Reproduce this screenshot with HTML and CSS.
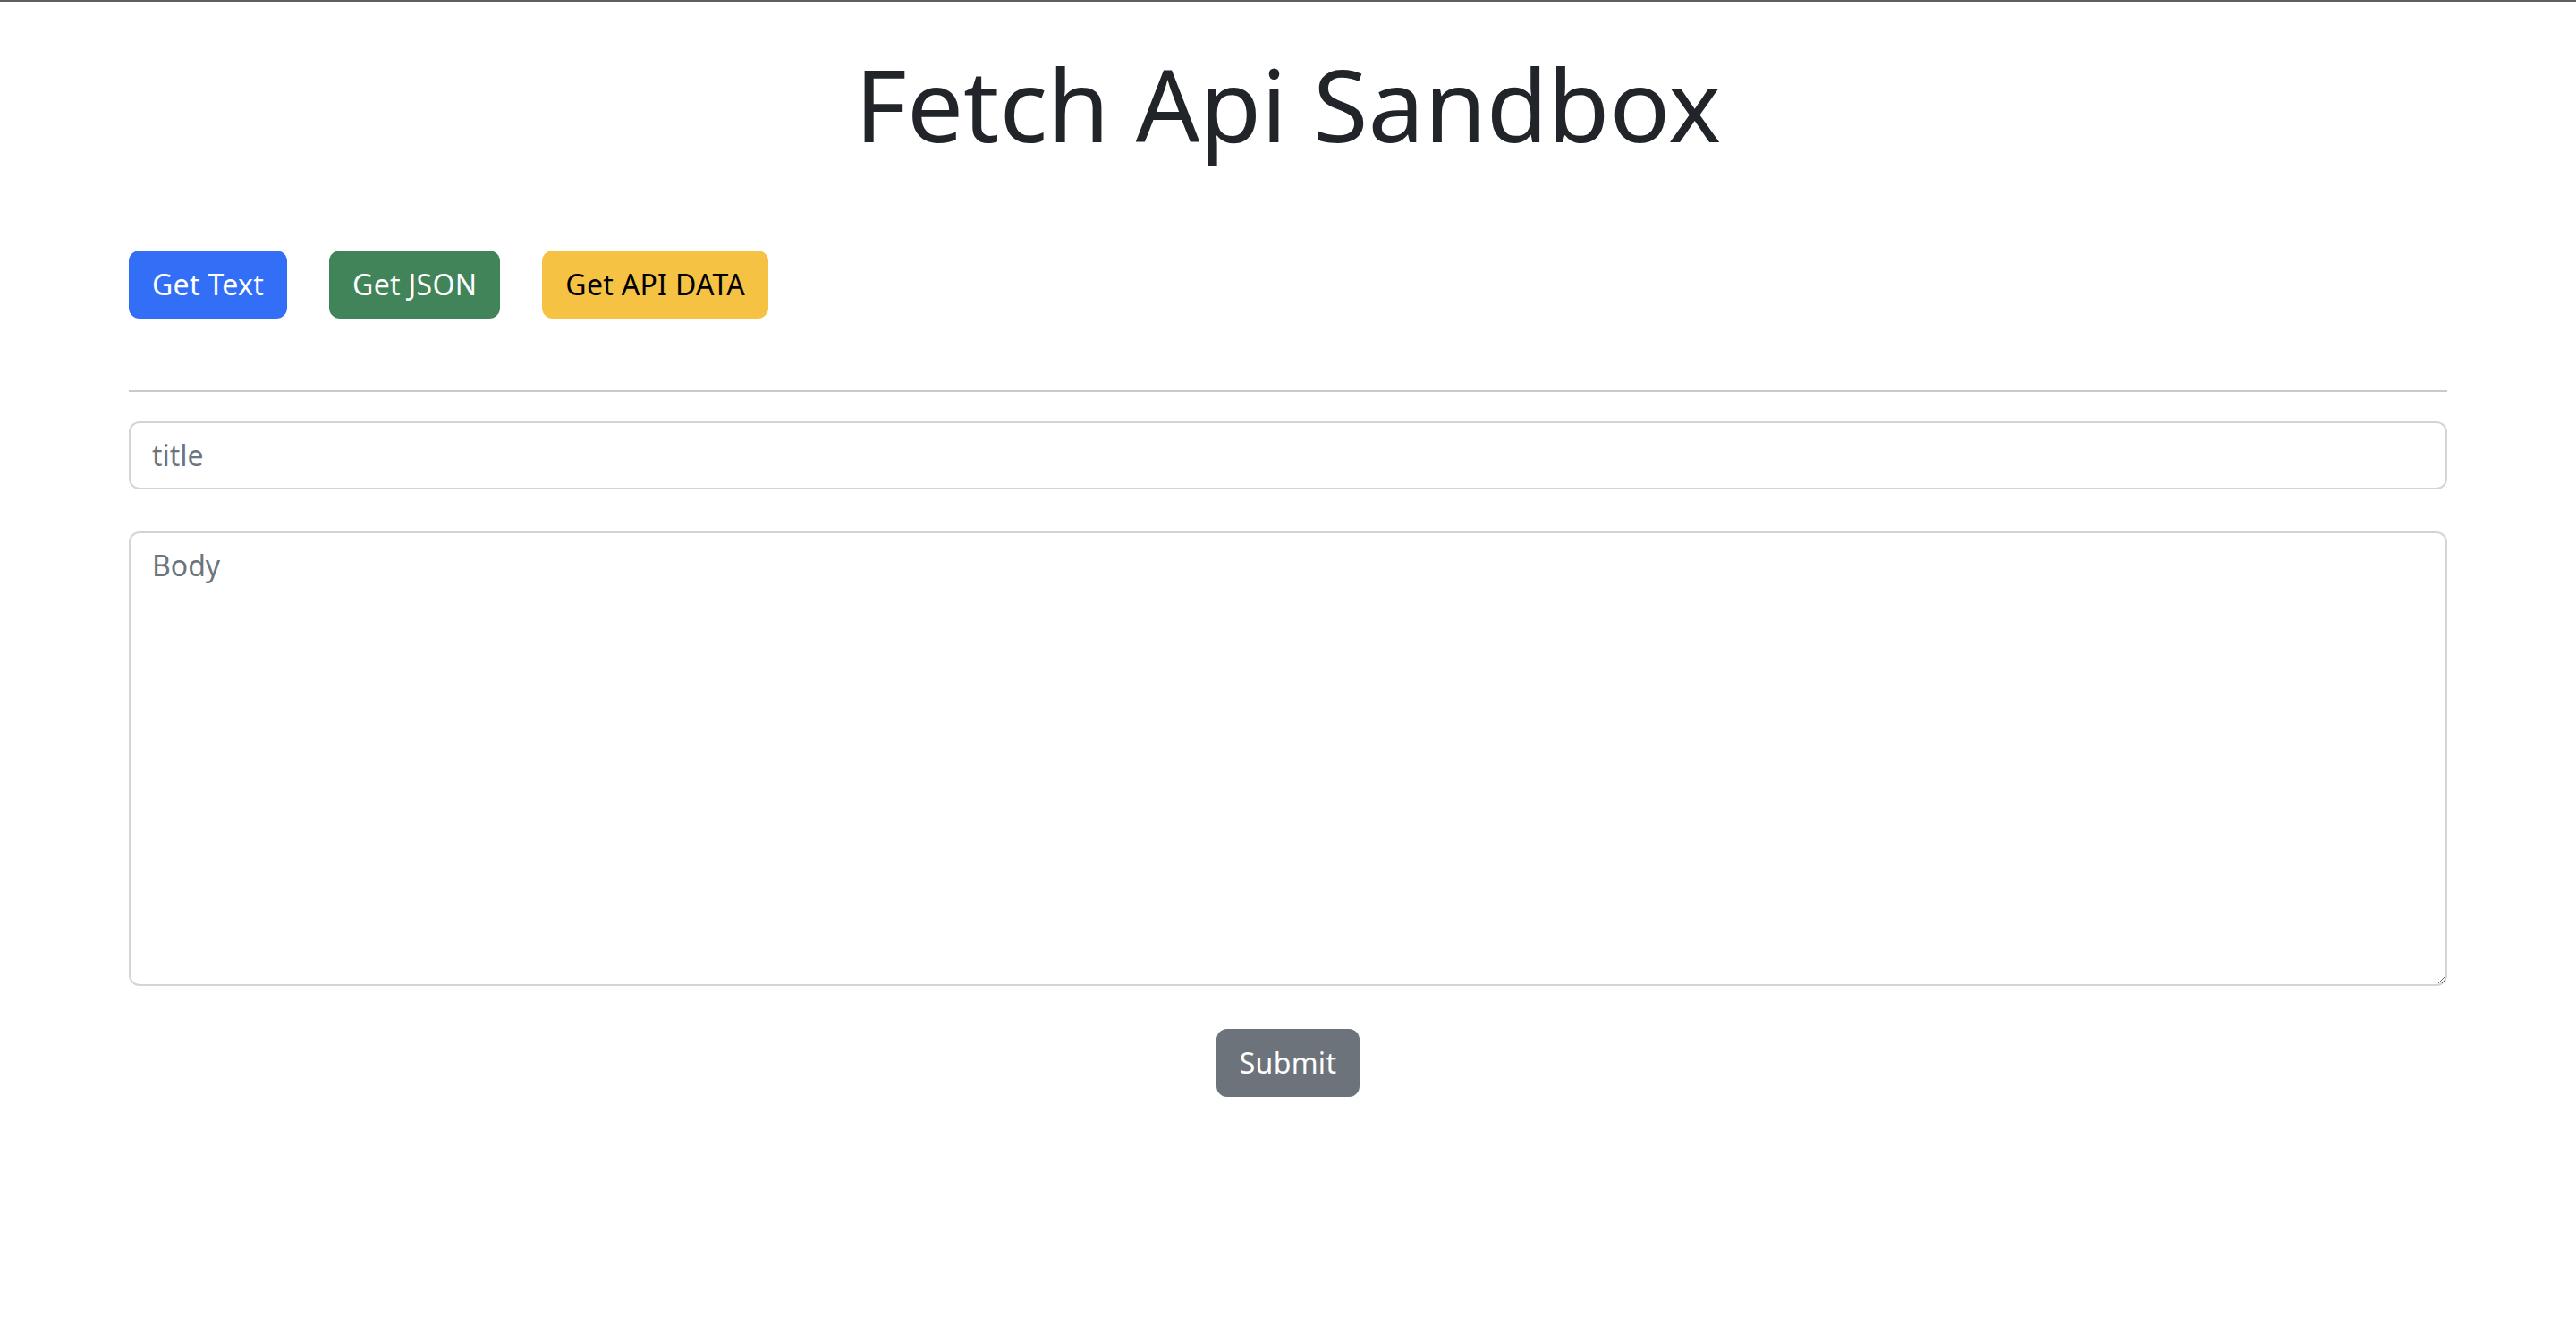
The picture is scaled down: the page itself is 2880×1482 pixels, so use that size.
FILE: index.html
```html
<!DOCTYPE html>
<html lang="en">
<head>
<meta charset="utf-8">
<title>Fetch Api Sandbox</title>
<link rel="stylesheet" href="styles.css">
</head>
<body>
<div class="container">
  <h1 class="title">Fetch Api Sandbox</h1>
  <div class="actions">
    <button class="btn btn-primary" type="button">Get Text</button>
    <button class="btn btn-success" type="button">Get JSON</button>
    <button class="btn btn-warning" type="button">Get API DATA</button>
  </div>
  <hr class="divider">
  <form class="post-form">
    <input class="field" type="text" placeholder="title">
    <textarea class="field field-area" rows="10" placeholder="Body"></textarea>
    <div class="submit-row">
      <button class="btn btn-secondary" type="submit">Submit</button>
    </div>
  </form>
</div>
</body>
</html>
```

FILE: styles.css
```css
html, body {
  margin: 0;
  padding: 0;
  background: #ffffff;
}

body {
  border-top: 2px solid #5f5e63;
  font-family: "Noto Sans", "Open Sans", sans-serif;
  color: #212529;
}

.container {
  width: 2592px;
  margin: 0 auto;
  padding-top: 47px;
}

.title {
  margin: 0;
  font-size: 112px;
  font-weight: 400;
  line-height: 1.2;
  text-align: center;
  color: #212529;
}

.actions {
  display: flex;
  gap: 47px;
  margin-top: 97px;
}

.btn {
  font-family: "Noto Sans", "Open Sans", sans-serif;
  font-size: 32px;
  line-height: 48px;
  letter-spacing: 0.3px;
  padding: 12px 24px;
  border: 2px solid transparent;
  border-radius: 12px;
  cursor: pointer;
}

.btn-primary {
  background: #336ff6;
  border-color: #336ff6;
  color: #ffffff;
}

.btn-success {
  background: #42845a;
  border-color: #42845a;
  color: #ffffff;
}

.btn-warning {
  background: #f6c244;
  border-color: #f6c244;
  color: #000000;
}

.btn-secondary {
  background: #6c737b;
  border-color: #6c737b;
  color: #ffffff;
}

.divider {
  margin: 80px 0 33px;
  border: 0;
  border-top: 2px solid #cacaca;
}

.post-form {
  display: flex;
  flex-direction: column;
  gap: 47px;
}

.field {
  display: block;
  box-sizing: border-box;
  width: 100%;
  margin: 0;
  font-family: "Noto Sans", "Open Sans", sans-serif;
  font-size: 32px;
  line-height: 48px;
  padding: 12px 24px;
  border: 2px solid #d1d5da;
  border-radius: 12px;
  color: #212529;
  background: #ffffff;
  outline: none;
}

.field::placeholder {
  color: #6c757d;
  opacity: 1;
}

.field-area {
  height: 508px;
  resize: vertical;
}

.submit-row {
  display: flex;
  justify-content: center;
  margin-top: 1px;
}
```
